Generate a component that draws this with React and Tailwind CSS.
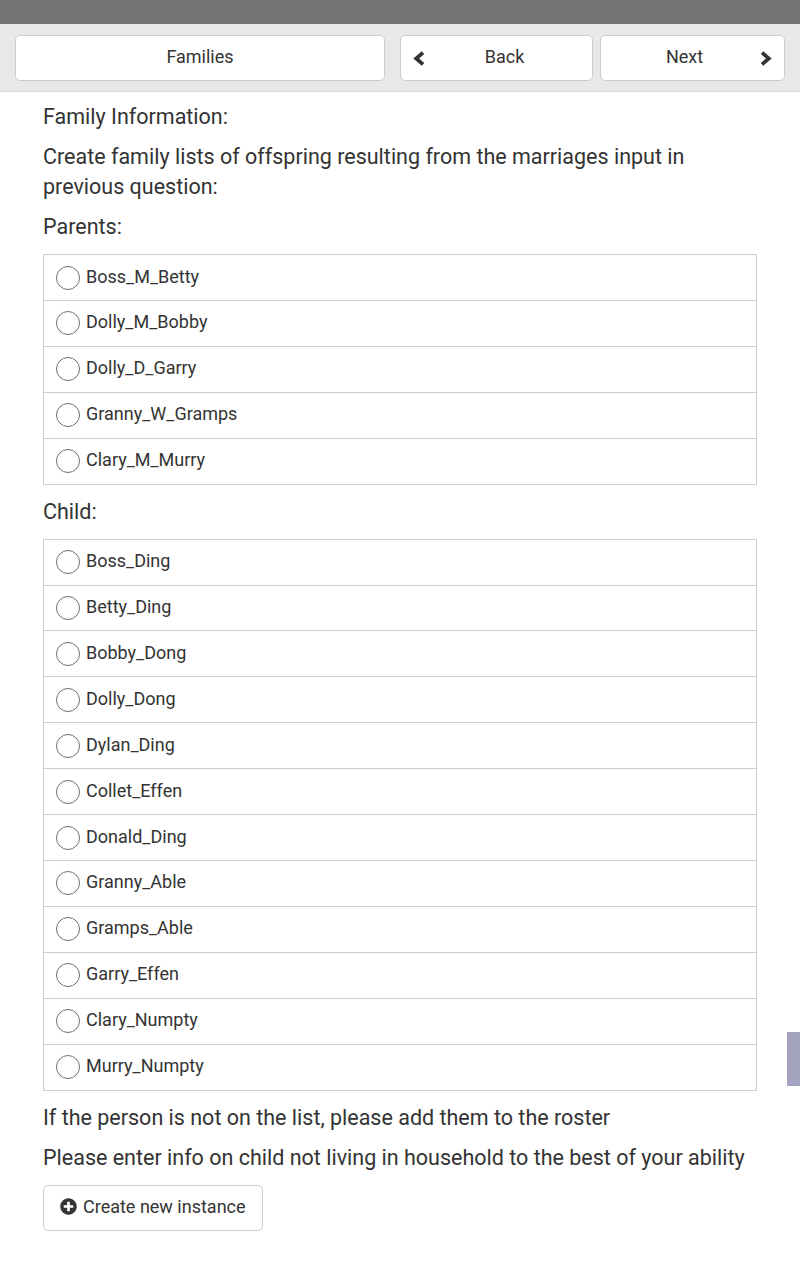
import React from 'react';
import { FaPlusCircle } from 'react-icons/fa';

const parents = ['Boss_M_Betty', 'Dolly_M_Bobby', 'Dolly_D_Garry', 'Granny_W_Gramps', 'Clary_M_Murry'];
const children = [
  'Boss_Ding', 'Betty_Ding', 'Bobby_Dong', 'Dolly_Dong', 'Dylan_Ding', 'Collet_Effen',
  'Donald_Ding', 'Granny_Able', 'Gramps_Able', 'Garry_Effen', 'Clary_Numpty', 'Murry_Numpty',
];

// heavy chevron, like the old font-awesome one
function Chevron({ dir }) {
  const pts = dir === 'left' ? '10,1.6 3.2,7.5 10,13.4' : '2,1.6 8.8,7.5 2,13.4';
  return (
    <svg width="12" height="15" viewBox="0 0 12 15" className="shrink-0">
      <polyline points={pts} fill="none" stroke="#333333" strokeWidth="3.8" strokeLinejoin="miter" />
    </svg>
  );
}

function RadioList({ items }) {
  return (
    <div className="my-3">
      {items.map((name, i) => (
        <label
          key={name}
          className={`flex items-center h-[47px] px-3 border border-[#cccccc] bg-white ${i > 0 ? '-mt-[1.1px]' : ''}`}
        >
          <span className="w-6 h-6 rounded-full border border-[#6f6f6f] shrink-0" />
          <span className="ml-[6px] text-[18px] text-[#333333] -mt-[2px]">{name}</span>
        </label>
      ))}
    </div>
  );
}

export default function App() {
  return (
    <div className="relative min-h-[1286px] bg-white text-[#333333]" style={{ fontFamily: 'Roboto, "Liberation Sans", sans-serif' }}>
      <div className="h-6 bg-[#737373]" />
      <div className="bg-[#e8e8e8] border-b border-[#d6d6d6] px-[15px] pt-[11px] pb-[10px] flex gap-[15px]">
        <button className="w-[370px] h-[46px] pb-[3px] bg-white border border-[#cccccc] rounded-[5px] text-[18px] text-[#333333]">
          Families
        </button>
        <button className="flex items-center w-[193px] h-[46px] px-3 bg-white border border-[#cccccc] rounded-[5px] text-[18px] text-[#333333]">
          <span className="w-4 flex"><Chevron dir="left" /></span>
          <span className="flex-1 text-center pb-[3px]">Back</span>
        </button>
        <button className="flex items-center w-[185px] -ml-2 h-[46px] px-3 bg-white border border-[#cccccc] rounded-[5px] text-[18px] text-[#333333]">
          <span className="flex-1 text-center pb-[3px]">Next</span>
          <span className="w-4 flex justify-end"><Chevron dir="right" /></span>
        </button>
      </div>

      <div className="px-[43px] pt-[10px] pb-[50px] text-[21.5px] leading-[30px]">
        <p className="mb-[10px]">Family Information:</p>
        <p className="mb-[10px]">Create family lists of offspring resulting from the marriages input in previous question:</p>
        <p>Parents:</p>
        <RadioList items={parents} />
        <p className="mt-[12px]">Child:</p>
        <RadioList items={children} />
        <p className="mt-[12px] mb-[10px]">If the person is not on the list, please add them to the roster</p>
        <p>Please enter info on child not living in household to the best of your ability</p>
        <button className="mt-3 h-[46px] px-4 flex items-center gap-[6px] bg-white border border-[#cccccc] rounded-[5px] text-[18px] text-[#333333]">
          <FaPlusCircle className="w-[17px] h-[17px] text-[#333333] -mt-[2px]" />
          <span className="-mt-[2px]">Create new instance</span>
        </button>
      </div>

      <div className="absolute right-0 top-[1032px] w-[13px] h-[54px] bg-[#a4a4c0]" />
    </div>
  );
}
